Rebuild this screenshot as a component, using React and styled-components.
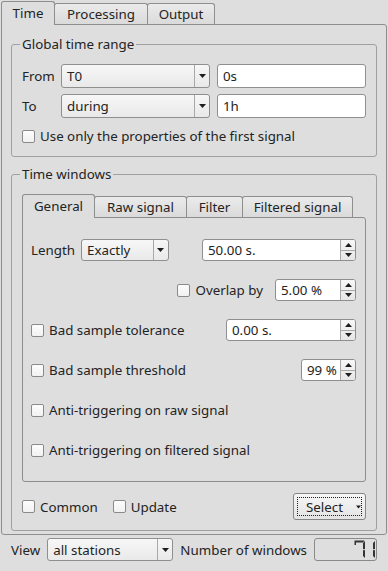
import React from "react";
import styled, { createGlobalStyle } from "styled-components";

const Global = createGlobalStyle`
  html, body { margin: 0; padding: 0; background: #dedede; }
  body {
    font-family: "Noto Sans", "Open Sans", sans-serif;
    font-size: 13.33px;
    color: #232323;
  }
  * { box-sizing: border-box; }
`;

const Window = styled.div`
  width: 388px;
  height: 571px;
  padding: 1px 1px 0;
  display: flex;
  flex-direction: column;
  overflow: hidden;
`;

const TabBar = styled.div`
  display: flex;
  align-items: flex-end;
  height: 23px;
`;

const Tab = styled.div`
  position: relative;
  z-index: ${(p) => (p.$active ? 2 : 1)};
  flex: none;
  width: ${(p) => p.$w}px;
  height: ${(p) => (p.$active ? 24 : 21)}px;
  margin-bottom: ${(p) => (p.$active ? -1 : 0)}px;
  border: 1px solid #8e8e8e;
  border-bottom: none;
  border-radius: 3px 3px 0 0;
  background: ${(p) => (p.$active ? "#dedede" : "linear-gradient(#ebebeb, #dadada)")};
  display: flex;
  align-items: center;
  justify-content: center;
  padding-bottom: ${(p) => (p.$active ? 2 : 0)}px;
  white-space: nowrap;
  & + & { margin-left: -1px; }
`;

const Pane = styled.div`
  border: 1px solid #8e8e8e;
  border-radius: 0 3px 3px 3px;
  display: flex;
  flex-direction: column;
`;

const OuterPane = styled(Pane)`
  height: 511px;
  padding: 11px 9px 3px;
  gap: 9px;
`;

const Group = styled.fieldset`
  margin: 0;
  min-width: 0;
  border: 1px solid #a0a0a0;
  border-radius: 3px;
  padding: 12px 10px ${(p) => p.$pb}px;
  display: flex;
  flex-direction: column;
`;

const Legend = styled.legend`
  margin-left: -2px;
  padding: 0 2px;
  line-height: 16px;
  height: 16px;
`;

const FormGrid = styled.div`
  display: grid;
  grid-template-columns: 32px 1fr 1fr;
  grid-template-rows: 24px 24px auto;
  column-gap: 7px;
  row-gap: 6px;
  align-items: center;
`;

const CheckRow = styled.div`
  grid-column: 1 / -1;
  display: flex;
  align-items: center;
  height: 18px;
  margin-top: 3px;
`;

const Label = styled.span`
  white-space: nowrap;
  flex: none;
`;

const Combo = styled.div`
  display: flex;
  align-items: stretch;
  height: ${(p) => p.$h || 24}px;
  width: ${(p) => (p.$w ? `${p.$w}px` : "auto")};
  flex: ${(p) => (p.$grow ? "1 1 0" : "none")};
  min-width: 0;
  border: 1px solid #8f8f8f;
  border-radius: 3px;
  background: linear-gradient(#f7f7f7, #e9e9e9);
  margin-left: ${(p) => p.$ml || 0}px;
`;

const ComboText = styled.span`
  flex: 1;
  padding-left: 5px;
  display: flex;
  align-items: center;
  white-space: nowrap;
  overflow: hidden;
`;

const ComboArrow = styled.span`
  width: 15px;
  flex: none;
  border-left: 1px solid #a8a8a8;
  display: flex;
  align-items: center;
  justify-content: center;
`;

const LineEdit = styled.div`
  height: 24px;
  border: 1px solid #8f8f8f;
  border-radius: 3px;
  background: #fff;
  padding-left: 5px;
  display: flex;
  align-items: center;
`;

const Spin = styled.div`
  display: flex;
  height: 22px;
  width: ${(p) => p.$w}px;
  flex: none;
  border: 1px solid #8f8f8f;
  border-radius: 3px;
  background: #fff;
  overflow: hidden;
  margin-left: ${(p) => (p.$auto ? "auto" : "0")};
`;

const SpinText = styled.span`
  flex: 1;
  padding-left: 5px;
  display: flex;
  align-items: center;
  white-space: nowrap;
`;

const SpinButtons = styled.span`
  width: 15px;
  flex: none;
  display: flex;
  flex-direction: column;
  border-left: 1px solid #a8a8a8;
  background: linear-gradient(#f7f7f7, #e6e6e6);
`;

const SpinBtn = styled.span`
  flex: 1;
  display: flex;
  align-items: center;
  justify-content: center;
  & + & { border-top: 1px solid #a8a8a8; }
`;

const Check = styled.label`
  display: inline-flex;
  align-items: center;
  gap: 5px;
  white-space: nowrap;
  flex: none;
`;

const Box = styled.span`
  width: 13px;
  height: 13px;
  border: 1px solid #8a8a8a;
  border-radius: 2px;
  background: linear-gradient(#fdfdfd, #f1f1f1);
  flex: none;
`;

const InnerPane = styled(Pane)`
  height: 265px;
  padding: 21px 9px 0 8px;
  gap: 18px;
`;

const FormRow = styled.div`
  display: flex;
  align-items: center;
  height: 22px;
  justify-content: ${(p) => (p.$end ? "flex-end" : "flex-start")};
  gap: ${(p) => p.$gap || 0}px;
`;

const ActionRow = styled.div`
  display: flex;
  align-items: center;
  gap: 15px;
  margin-top: 11px;
  height: 27px;
`;

const Button = styled.div`
  margin-left: auto;
  width: 73px;
  height: 27px;
  border: 1px solid #858585;
  border-radius: 3px;
  background: linear-gradient(#f6f6f6, #e4e4e4);
  padding: 3px;
  display: flex;
`;

const FocusRect = styled.span`
  flex: 1;
  border: 1px dotted #202020;
  display: flex;
  align-items: center;
  padding-left: 8px;
  gap: 13px;
`;

const BottomRow = styled.div`
  display: flex;
  align-items: center;
  gap: 7px;
  margin-top: 3px;
  padding: 0 10px;
  height: 23px;
`;

const Lcd = styled.div`
  width: 63px;
  height: 23px;
  flex: none;
  border: 1px solid #8a8a8a;
  border-radius: 3px;
  display: flex;
`;

const Arrow = ({ up, w = 7 }) => (
  <svg width={w} height="4" viewBox="0 0 7 4" style={{ display: "block" }}>
    <path d={up ? "M0 4 L3.5 0 L7 4 Z" : "M0 0 L7 0 L3.5 4 Z"} fill="#1e1e1e" />
  </svg>
);

const ComboBox = ({ text, ...rest }) => (
  <Combo {...rest}>
    <ComboText>{text}</ComboText>
    <ComboArrow>
      <Arrow />
    </ComboArrow>
  </Combo>
);

const SpinBox = ({ text, ...rest }) => (
  <Spin {...rest}>
    <SpinText>{text}</SpinText>
    <SpinButtons>
      <SpinBtn>
        <Arrow up />
      </SpinBtn>
      <SpinBtn>
        <Arrow />
      </SpinBtn>
    </SpinButtons>
  </Spin>
);

const CheckBox = ({ children }) => (
  <Check>
    <Box />
    {children}
  </Check>
);

const LcdDigits = () => (
  <svg width="61" height="21" viewBox="0 0 61 21" aria-label="71">
    <title>71</title>
    <g fill="#333">
      <polygon points="39.5,1.5 49.5,1.5 48,3.5 41,3.5 41,6 39.5,6" />
      <polygon points="48,4 50,2 50,9.5 49,10.5 48,9.5" />
      <polygon points="48,11.5 49,10.7 50,11.5 50,19 48,17" />
      <polygon points="58,4 60,2 60,9.5 59,10.5 58,9.5" />
      <polygon points="58,11.5 59,10.7 60,11.5 60,19 58,17" />
    </g>
  </svg>
);

export default function App() {
  return (
    <>
      <Global />
      <Window>
        <div>
          <TabBar>
            <Tab $active $w={54}>Time</Tab>
            <Tab $w={94}>Processing</Tab>
            <Tab $w={68}>Output</Tab>
          </TabBar>
          <OuterPane>
            <Group $pb={11}>
              <Legend>Global time range</Legend>
              <FormGrid>
                <Label>From</Label>
                <ComboBox text="T0" />
                <LineEdit>0s</LineEdit>
                <Label>To</Label>
                <ComboBox text="during" />
                <LineEdit>1h</LineEdit>
                <CheckRow>
                  <CheckBox>Use only the properties of the first signal</CheckBox>
                </CheckRow>
              </FormGrid>
            </Group>
            <Group $pb={10}>
              <Legend>Time windows</Legend>
              <div>
                <TabBar>
                  <Tab $active $w={73}>General</Tab>
                  <Tab $w={93}>Raw signal</Tab>
                  <Tab $w={57}>Filter</Tab>
                  <Tab $w={111}>Filtered signal</Tab>
                </TabBar>
                <InnerPane>
                  <FormRow>
                    <Label>Length</Label>
                    <ComboBox text="Exactly" $w={88} $h={22} $ml={6} />
                    <SpinBox text="50.00 s." $w={154} $auto />
                  </FormRow>
                  <FormRow $end $gap={12}>
                    <CheckBox>Overlap by</CheckBox>
                    <SpinBox text="5.00 %" $w={81} />
                  </FormRow>
                  <FormRow>
                    <CheckBox>Bad sample tolerance</CheckBox>
                    <SpinBox text="0.00 s." $w={130} $auto />
                  </FormRow>
                  <FormRow>
                    <CheckBox>Bad sample threshold</CheckBox>
                    <SpinBox text="99 %" $w={55} $auto />
                  </FormRow>
                  <FormRow>
                    <CheckBox>Anti-triggering on raw signal</CheckBox>
                  </FormRow>
                  <FormRow>
                    <CheckBox>Anti-triggering on filtered signal</CheckBox>
                  </FormRow>
                </InnerPane>
              </div>
              <ActionRow>
                <CheckBox>Common</CheckBox>
                <CheckBox>Update</CheckBox>
                <Button>
                  <FocusRect>
                    Select
                    <Arrow w={5} />
                  </FocusRect>
                </Button>
              </ActionRow>
            </Group>
          </OuterPane>
        </div>
        <BottomRow>
          <Label>View</Label>
          <ComboBox text="all stations" $grow $h={23} />
          <Label>Number of windows</Label>
          <Lcd>
            <LcdDigits />
          </Lcd>
        </BottomRow>
      </Window>
    </>
  );
}
